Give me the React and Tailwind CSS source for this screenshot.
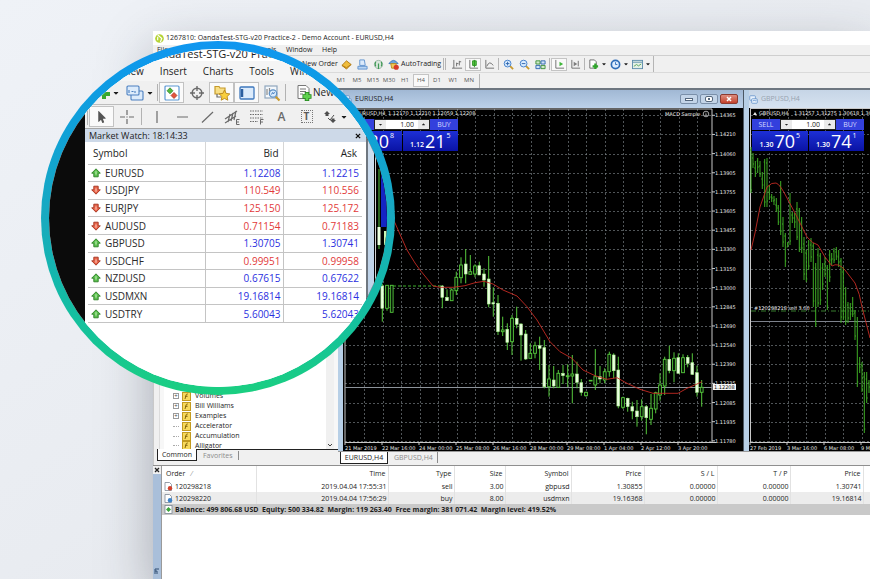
import React from "react";
import { FaCaretDown, FaMousePointer } from "react-icons/fa";

const quotes = [
  { symbol: "EURUSD", bid: "1.12208", ask: "1.12215", up: true },
  { symbol: "USDJPY", bid: "110.549", ask: "110.556", up: false },
  { symbol: "EURJPY", bid: "125.150", ask: "125.172", up: false },
  { symbol: "AUDUSD", bid: "0.71154", ask: "0.71183", up: false },
  { symbol: "GBPUSD", bid: "1.30705", ask: "1.30741", up: true },
  { symbol: "USDCHF", bid: "0.99951", ask: "0.99958", up: false },
  { symbol: "NZDUSD", bid: "0.67615", ask: "0.67622", up: true },
  { symbol: "USDMXN", bid: "19.16814", ask: "19.16814", up: true },
  { symbol: "USDTRY", bid: "5.60043", ask: "5.62043", up: true },
];

const orders = [
  ["120298218", "2019.04.04 17:55:31", "sell", "3.00", "gbpusd", "1.30855", "0.00000", "0.00000", "1.30741"],
  ["120298220", "2019.04.04 17:56:29", "buy", "8.00", "usdmxn", "19.16368", "0.00000", "0.00000", "19.16814"],
];

const orderHeads = ["Time", "Type", "Size", "Symbol", "Price", "S / L", "T / P", "Price"];

const timeframes = ["M1", "M5", "M15", "M30", "H1", "H4", "D1", "W1", "MN"];

const priceLabels = [
  "1.14365", "1.14210", "1.14060", "1.13905", "1.13755", "1.13605", "1.13455", "1.13300", "1.13150",
  "1.13000", "1.12845", "1.12690", "1.12540", "1.12390", "1.12235", "1.12085", "1.11935", "1.11780",
];

const eurDates = [
  "21 Mar 2019", "22 Mar 16:00", "24 Mar 00:00", "25 Mar 08:00", "26 Mar 16:00",
  "28 Mar 00:00", "29 Mar 08:00", "1 Apr 04:00", "2 Apr 12:00", "3 Apr 20:00",
];

// x, high, body top, body bottom, low, filled
const eurCandles = [
  [382.3, 284, 286, 308.3, 321.7, 1],
  [387, 285, 285.3, 308.3, 310.7, 0],
  [391.7, 285, 285.3, 312.3, 312.3, 0],
  [442.3, 285, 286, 297.3, 308.3, 1],
  [447, 289.3, 297.3, 300.7, 300.7, 1],
  [451.7, 288.3, 290, 300.7, 300.7, 0],
  [456.3, 271.7, 277.3, 290.7, 295, 0],
  [461, 257.3, 265, 277.7, 283.3, 0],
  [465.7, 249, 264, 274, 283.3, 1],
  [470.3, 255, 271.7, 274.3, 274.3, 0],
  [475, 264.3, 266, 274, 277.3, 0],
  [479.3, 261.7, 265.7, 275, 275, 1],
  [484, 268.3, 274, 280, 286.7, 1],
  [488.7, 256, 279, 304, 307.3, 1],
  [493.3, 287.3, 302.7, 304, 316.7, 1],
  [498, 295, 303.3, 331.7, 335, 1],
  [502.7, 316.7, 330, 331.7, 336, 0],
  [507.3, 323.3, 329.3, 342.3, 350, 1],
  [512, 315, 318.3, 341.7, 355, 0],
  [516.7, 306.7, 318.3, 324.3, 328.3, 1],
  [521, 323.3, 324, 335, 360.7, 1],
  [525.7, 330, 334, 359, 360, 1],
  [530.3, 343.3, 353.3, 358.3, 358.3, 0],
  [535, 341.7, 345.7, 353.3, 358.3, 0],
  [539.7, 336.7, 345.7, 348.3, 370, 1],
  [544.3, 340, 347.7, 386.7, 388.3, 1],
  [549, 365, 379, 386.7, 396.7, 0],
  [553.7, 366, 380, 386, 388.3, 1],
  [558.3, 370, 373.3, 387.3, 387.3, 0],
  [563, 365, 373.3, 375.7, 384, 1],
  [567.7, 364.3, 375.7, 376.7, 387, 0],
  [572.3, 355, 374, 376, 403.3, 0],
  [577, 361.7, 374, 382.3, 388.3, 1],
  [581.3, 379, 382.7, 392.3, 395.7, 1],
  [586, 391.7, 392.3, 395.7, 396.7, 0],
  [590.7, 380.3, 380.3, 381, 381, 0],
  [595.3, 349, 376.7, 385, 390, 0],
  [600, 366, 376.7, 379, 383.3, 1],
  [604.7, 368.3, 371.7, 380, 383.3, 0],
  [609.3, 351.7, 354.3, 371.7, 376.7, 0],
  [613.7, 353.3, 355, 370.7, 378.3, 1],
  [618.3, 356.7, 370, 406, 408.3, 1],
  [623, 396.7, 397.7, 407.3, 409, 0],
  [627.7, 397.7, 398.3, 406.7, 411.7, 1],
  [632.3, 401.7, 406.7, 411, 419.3, 1],
  [637, 400, 411, 416.7, 426.7, 1],
  [641.7, 399.3, 406.7, 416.7, 420.7, 0],
  [646.3, 405, 406.7, 417.7, 434.3, 1],
  [651, 394, 408.3, 419.3, 425, 0],
  [655.7, 391.7, 392.7, 409, 413.3, 0],
  [660, 373.3, 385, 395, 400.7, 0],
  [664.7, 356.7, 359.3, 386, 395, 0],
  [669.3, 345.7, 359.3, 370.7, 373.3, 1],
  [674, 352.3, 358.3, 370.7, 382.3, 0],
  [678.3, 353.3, 357.7, 373.3, 373.3, 1],
  [683, 354.3, 357.7, 372.7, 372.7, 0],
  [687.7, 355, 357.3, 363.3, 367.3, 1],
  [692.3, 353.3, 362.7, 374.3, 375, 1],
  [697, 365.7, 372.7, 392.3, 396.7, 1],
  [701.7, 380, 387.3, 392.3, 406.7, 0],
];

// x, high, low
const gbpBars = [
  [751, 147, 193], [753, 153, 168], [755.3, 161, 177], [757.7, 158, 173], [760, 161, 177],
  [762.3, 172, 189], [764.7, 159, 207], [767, 158, 207], [769.3, 185, 200], [771.7, 194, 202],
  [774, 196, 205], [776.3, 198, 212], [778.3, 205, 225], [780.7, 181, 235], [783, 217, 247],
  [785.3, 233, 267], [787.7, 242, 247], [790, 193, 245], [792.3, 212, 223], [794.7, 213, 228],
  [797, 202, 240], [799.3, 208, 252], [801.7, 217, 253], [804, 237, 280], [806.3, 250, 282],
  [808.7, 240, 270], [811, 238, 262], [813.3, 243, 307], [815.7, 263, 327], [818, 248, 307],
  [820.3, 253, 305], [822.7, 263, 290], [825, 257, 277], [827.3, 265, 310], [829.7, 250, 282],
  [831.7, 253, 265], [834, 248, 263], [836.3, 247, 260], [838.7, 250, 267], [841, 258, 323],
  [843.3, 267, 320], [845.7, 287, 325], [848, 302, 323], [850.3, 303, 320], [852.7, 297, 317],
  [855, 310, 340], [857.3, 317, 387], [859.7, 357, 373], [862, 362, 392], [864.3, 372, 433],
  [866.7, 372, 403], [869, 380, 393],
];

const range = (n) => Array.from({ length: n }, (_, i) => i);

const Grid = ({ x, cols, right, left }) => (
  <g stroke="#7c8388" strokeWidth="1" strokeDasharray="2 2" shapeRendering="crispEdges">
    {range(cols).map((i) => (
      <line key={i} x1={Math.round(x + i * 18.5)} x2={Math.round(x + i * 18.5)} y1="109" y2="442" opacity="0.65" />
    ))}
    {range(18).map((i) => (
      <line key={i} x1={left} x2={right} y1={Math.round(115.3 + i * 19.15)} y2={Math.round(115.3 + i * 19.15)} opacity="0.65" />
    ))}
  </g>
);

const EurChart = () => (
  <svg viewBox="343 108 396 343" width="396" height="343" className="block" fontFamily="DejaVu Sans" fontSize="5" fill="#e6e6e6">
    <rect x="343" y="108" width="396" height="343" fill="#000" />
    <Grid x={364} cols={19} left={345} right={712} />
    <path d="M345 442V109H712V442M345 442.5H716" fill="none" stroke="#c8c8c8" />
    <line x1="345" x2="712" y1="387.5" y2="387.5" stroke="#8d949b" />
    {priceLabels.map((p, i) => (
      <g key={p}>
        <line x1="712" x2="715" y1={115.3 + i * 19.15} y2={115.3 + i * 19.15} stroke="#c8c8c8" />
        <text x="715" y={Math.round(117.3 + i * 19.15)}>{p}</text>
      </g>
    ))}
    {eurDates.map((d, i) => (
      <g key={d}>
        <line x1={345 + i * 37} x2={345 + i * 37} y1="442" y2="445" stroke="#c8c8c8" />
        <text x={345 + i * 37} y="450">{d}</text>
      </g>
    ))}
    <line x1="393" x2="442" y1="286" y2="286" stroke="#3faf2c" strokeDasharray="3 2" />
    {eurCandles.map(([x, hi, top, bottom, lo, filled], i) => (
      <g key={i} stroke="#55c83c">
        <line x1={x} x2={x} y1={hi} y2={lo} />
        <rect x={x - 1.4} y={top} width="2.8" height={Math.max(bottom - top, 0.5)} fill={filled ? "#eaffe0" : "#061606"} strokeWidth={filled ? 0.6 : 0.9} stroke={filled ? "#a9ec8e" : "#55c83c"} />
      </g>
    ))}
    <path
      d="M380 196L395 223L407 250L415 263L420 270L433 286L440 287.3L453 287.3L465 285.7L475 282.7L484 281.3L493 284L503 290L517 296L527 306.7L537 320L550 341.7L560 351.7L572 358.3L583 370L595 375.7L607 379.3L617 377.7L627 383.3L640 389.3L653 393.3L678 393.3L687 388.3L697 384L702 381.7"
      fill="none"
      stroke="#c42a22"
      strokeWidth="0.9"
    />
    <text x="388" y="115">1.12170 1.12210 1.12059 1.12208</text>
    <text x="356" y="115">EURUSD,H4</text>
    <text x="665" y="116">MACD Sample</text>
    <circle cx="706" cy="114" r="2.8" fill="none" stroke="#e6e6e6" strokeWidth="0.7" />
    <path d="M704.5 115.5q1.5 -1.6 3 0M705 113.2h.6M706.6 113.2h.6" fill="none" stroke="#e6e6e6" strokeWidth="0.7" />
    <rect x="713" y="384" width="23" height="6" fill="#f4f4f4" />
    <text x="714" y="389" fill="#111">1.12208</text>
  </svg>
);

const GbpChart = () => (
  <svg viewBox="749 108 121 343" width="121" height="343" className="block shrink-0" fontFamily="DejaVu Sans" fontSize="5" fill="#e6e6e6">
    <rect x="749" y="108" width="121" height="343" fill="#000" />
    <Grid x={769} cols={6} left={751} right={870} />
    <path d="M750.5 442V109M750 108.5H870M750 442.5H870" fill="none" stroke="#c8c8c8" />
    <line x1="751" x2="870" y1="321.5" y2="321.5" stroke="#7d828c" />
    <line x1="751" x2="870" y1="311" y2="311" stroke="#46a03a" strokeDasharray="5 2 1 2" strokeWidth="0.8" />
    {gbpBars.map(([x, hi, lo], i) => (
      <path key={x} d={`M${x} ${hi}V${lo}M${x - 1} ${hi + 3 + (i % 3) * 2}h1M${x} ${lo - 3 - (i % 4)}h1`} stroke="#3fae25" strokeWidth="1" fill="none" />
    ))}
    <path
      d="M751 250L755 233L760 207L767 187Q772 182 776 183T787 198L795 213L807 237Q813 244 818 245L825 257L832 266Q838 262 845 270L855 283Q860 294 862 307L870 338"
      fill="none"
      stroke="#c42a22"
      strokeWidth="0.9"
    />
    <text x="759" y="115">GBPUSD,H4</text>
    <text x="794" y="115">1.31257 1.31275 1.30618 1.307</text>
    <path d="M753 115h4l-2 -3z" />
    <text x="754" y="310">#120298218 sell 3.00</text>
    {["27 Feb 2019", "3 Mar 16:00", "6 Mar 08:00", "9 M"].map((d, i) => (
      <g key={d}>
        <line x1={750 + i * 37} x2={750 + i * 37} y1="442" y2="445" stroke="#c8c8c8" />
        <text x={750 + i * 37} y="450">{d}</text>
      </g>
    ))}
  </svg>
);

const Price = ({ base, big, sup }) => (
  <button className="flex flex-1 items-end justify-center gap-px bg-linear-to-b from-[#1d2fd6] to-[#0a12a4] text-white">
    <span className="pb-px text-[7px] leading-[10px] font-semibold">{base}</span>
    <span className="text-[18px] leading-[20px]">{big}</span>
    <span className="self-start text-[7px] leading-[10px]">{sup}</span>
  </button>
);

const TradePanel = ({ label, sell, buy }) => (
  <div className="flex w-28 flex-col gap-px">
    <div className="flex h-[11px]">
      <button className="w-7 bg-[#3340dd] text-[7px] leading-[11px] text-[#d5daff]">SELL</button>
      <div className="flex flex-1 items-center border border-[#222] bg-white text-[#222]">
        <button aria-label="Decrease volume" className="h-full w-[11px] bg-[#e9e9e9]">
          <FaCaretDown className="mx-auto size-[5px]" />
        </button>
        <input aria-label={label} defaultValue="1.00" className="w-0 flex-1 pr-1 text-right text-[7px] leading-[9px]" />
        <button aria-label="Increase volume" className="h-full w-[11px] bg-[#e9e9e9]">
          <FaCaretDown className="mx-auto size-[5px] rotate-180" />
        </button>
      </div>
      <button className="w-7 bg-[#3340dd] text-[7px] leading-[11px] text-[#d5daff]">BUY</button>
    </div>
    <div className="flex h-5 gap-px">
      <Price {...sell} />
      <Price {...buy} />
    </div>
  </div>
);

const WindowIcon = ({ className }) => (
  <svg viewBox="0 0 12 12" className={className} fill="#e8f2fd" stroke="#5b8cc7">
    <rect x="1" y="1" width="7.5" height="6" rx="1" />
    <rect x="3.5" y="5" width="7.5" height="6" rx="1" />
    <path d="M5 8l2 -1l1 1l2 -1" fill="none" />
  </svg>
);

const Sep = () => <span className="mx-px h-3 w-px bg-[#b5b5b5]" />;

const Tool = ({ label, active, caret, children }) => (
  <button
    aria-label={label}
    className={`flex h-[13px] items-center justify-center ${caret ? "w-[22px] gap-[2px]" : "w-4"} ${active ? "border border-[#c4c4c4] bg-[#f9f9f9]" : ""}`}
  >
    {children}
    {caret && <FaCaretDown className="size-[6px]" />}
  </button>
);

const Ico = ({ children }) => (
  <svg viewBox="0 0 12 12" className="size-[11px] shrink-0" fill="none" stroke="#6b6b6b" strokeWidth="1">
    {children}
  </svg>
);

const MainToolbar = () => (
  <div className="flex h-4 items-center pl-[149px]">
    <span className="w-9 text-[7px]">New Order</span>
    <Tool label="MetaEditor">
      <Ico>
        <path d="M1 7l5 -5l5 4l-5 5z" fill="#f0bd3c" stroke="#b27a12" />
        <path d="M1 7l5 2.5l5 -3.5" stroke="#b27a12" />
      </Ico>
    </Tool>
    <Tool label="Terminal">
      <Ico>
        <path d="M3 1h5l1 6H3z" fill="#dbeafb" stroke="#5f93cf" />
        <path d="M1 8h10v3H1z" fill="#b8d4f2" stroke="#5f93cf" />
      </Ico>
    </Tool>
    <Tool label="Signals">
      <Ico>
        <circle cx="6" cy="6" r="4.5" fill="#d9e6dc" stroke="#9bb5a4" />
        <path d="M6 5v6M3 3q-1.5 3 0 5M9 3q1.5 3 0 5" stroke="#3f9a55" strokeWidth="1.3" />
      </Ico>
    </Tool>
    <button className="flex items-center gap-[2px] pl-[2px] text-[7px]">
      <Ico>
        <path d="M1 5q5 -7 10 0z" fill="#6ea5de" stroke="#3d77b8" />
        <path d="M3 5h6l-1 5H4z" fill="#f3c95a" stroke="#b88a22" />
        <circle cx="9" cy="9" r="2.8" fill="#d63a2a" stroke="none" />
      </Ico>
      AutoTrading
    </button>
    <span className="mr-[3px] ml-[2px] h-3 w-[3px] border-x border-[#b5b5b5]" />
    <Tool label="Bar chart">
      <Ico>
        <path d="M2 1v9H11M2 10H0M5 4v4M5 5h2M8 2v5M8 3h2" />
      </Ico>
    </Tool>
    <Tool label="Candlesticks" active>
      <Ico>
        <path d="M2 1v9H11" />
        <path d="M5 2h4v5H5z" fill="#5ccb48" stroke="#2a9320" />
        <path d="M7 1v8" stroke="#2a9320" />
      </Ico>
    </Tool>
    <Tool label="Line chart">
      <Ico>
        <path d="M2 1v9H11M3 8q3 -7 7 -1" />
      </Ico>
    </Tool>
    <Sep />
    <Tool label="Zoom in">
      <Ico>
        <path d="M7.5 7.5l3.5 3.5" stroke="#c99a2e" strokeWidth="2" />
        <circle cx="5" cy="5" r="3.7" fill="#d8ebff" stroke="#3d7cc9" />
        <path d="M3 5h4M5 3v4" stroke="#2b62ab" />
      </Ico>
    </Tool>
    <Tool label="Zoom out">
      <Ico>
        <path d="M7.5 7.5l3.5 3.5" stroke="#c99a2e" strokeWidth="2" />
        <circle cx="5" cy="5" r="3.7" fill="#d8ebff" stroke="#3d7cc9" />
        <path d="M3 5h4" stroke="#2b62ab" />
      </Ico>
    </Tool>
    <Tool label="Tile windows">
      <Ico>
        <path d="M1 2h4.5v3.5H1zM6.5 7h4.5v3.5H6.5z" fill="#cfe9c8" stroke="#3d8f3a" />
        <path d="M6.5 2h4.5v3.5H6.5zM1 7h4.5v3.5H1z" fill="#cfe2f8" stroke="#2e66ad" />
      </Ico>
    </Tool>
    <Sep />
    <Tool label="Auto scroll" active>
      <Ico>
        <path d="M2 1v9H11" />
        <path d="M6 3v5l4 -2.5z" fill="#3fb63a" stroke="none" />
      </Ico>
    </Tool>
    <Tool label="Chart shift">
      <Ico>
        <path d="M2 1v9H11M9 2v6" />
        <path d="M4 3v5l4 -2.5z" fill="#7b7b7b" stroke="none" />
      </Ico>
    </Tool>
    <Sep />
    <Tool label="Indicators" caret>
      <Ico>
        <path d="M2 1h5l2 2v7H2z" fill="#fff" />
        <path d="M8 5v6M5 8h6" stroke="#2fa52a" strokeWidth="2.4" />
      </Ico>
    </Tool>
    <Tool label="Periods" caret>
      <Ico>
        <circle cx="6" cy="6" r="4.5" fill="#dcecff" stroke="#2f6db8" strokeWidth="1.8" />
        <path d="M6 3.5V6h2" stroke="#2f6db8" />
      </Ico>
    </Tool>
    <Tool label="Templates" caret>
      <Ico>
        <rect x="0.5" y="1.5" width="11" height="9" fill="#e4f0e6" stroke="#5c8cab" />
        <path d="M1 3.5h10" stroke="#5c8cab" />
        <path d="M2 8l3 -2l2 1.5l3 -2" stroke="#55a358" />
      </Ico>
    </Tool>
    <span className="ml-px h-4 w-px bg-[#b5b5b5]" />
  </div>
);

const FunctionIcon = () => (
  <svg viewBox="0 0 9 9" className="size-[9px]">
    <rect x="0.5" y="0.5" width="8" height="8" fill="#f7d95c" stroke="#c29a1f" />
    <path d="M3 7l1.2 -4.2q.3 -1 1.6 -.8M3.2 4.3h2.4" fill="none" stroke="#7a5a05" strokeWidth="0.9" />
  </svg>
);

const Navigator = () => (
  <aside className="flex w-[185px] flex-col justify-end border-l border-[#c9c9c9] bg-[#f0f0f0] pb-1 pl-px">
    <div className="ml-1 flex flex-1 border-l border-[#dcdcdc] bg-[#f7f7f7] pr-1">
      <ul className="ml-1 flex flex-1 flex-col justify-end bg-white pl-[9px] text-[7px]">
        {["Volumes", "Bill Williams", "Examples", "Accelerator", "Accumulation", "Alligator"].map((name, i) => (
          <li key={name} className={`flex gap-[3px] overflow-hidden ${i === 5 ? "h-2 items-start" : "h-[10px] items-center"}`}>
            {i < 3 ? (
              <span className="flex size-[6px] items-center justify-center border border-[#9a9a9a] text-[6px] leading-none text-[#444]">+</span>
            ) : (
              <span className="w-[6px] self-center border-t border-dotted border-[#aaa]" />
            )}
            <FunctionIcon />
            <span className="pl-px leading-[10px]">{name}</span>
          </li>
        ))}
      </ul>
      <span className="flex w-2 items-end justify-center bg-[#f0f0f0] pb-[2px]">
        <svg viewBox="0 0 6 4" className="w-[6px]" fill="none" stroke="#444">
          <path d="M1 1l2 2l2 -2" />
        </svg>
      </span>
    </div>
    <div className="ml-[2px] flex h-3 items-stretch text-[7px]">
      <button className="w-10 border border-t-0 border-[#222] bg-white leading-[10px]">Common</button>
      <button className="flex-1 border-t border-[#222] pl-[6px] text-left leading-[10px] text-[#8b8b8b]">
        <span className="border-r border-[#8b8b8b] pr-[5px]">Favorites</span>
      </button>
    </div>
  </aside>
);

const CaptionButtons = () => (
  <div className="flex gap-[2px]">
    <button aria-label="Minimize" className="flex h-[10px] w-[18px] items-center justify-center rounded-xs border border-[#7a8fa9] bg-[#c3d4e8]">
      <span className="h-[3px] w-2 border border-[#55677d] bg-white" />
    </button>
    <button aria-label="Maximize" className="flex h-[10px] w-[18px] items-center justify-center rounded-xs border border-[#7a8fa9] bg-[#c3d4e8]">
      <span className="flex h-[6px] w-2 items-center justify-center rounded-xs border border-[#55677d] bg-white">
        <span className="size-[2px] bg-[#55677d]" />
      </span>
    </button>
    <button aria-label="Close" className="flex h-[10px] w-[18px] items-center justify-center rounded-xs border border-[#8c3b31] bg-linear-to-b from-[#dd8d7f] to-[#c23f2b]">
      <svg viewBox="0 0 6 6" className="size-[6px]" stroke="#fff" strokeWidth="1.5">
        <path d="M1 1l4 4M5 1l-4 4" />
      </svg>
    </button>
  </div>
);

const Workspace = () => (
  <div className="flex border-t-2 border-[#6d7680]">
    <Navigator />
    <main className="flex min-w-0 flex-1 flex-col">
      <div className="flex bg-[#b7cfe6]">
        <section className="w-[406px] border-r border-[#4b5763] pl-[5px]">
          <header className="flex h-[18px] items-center gap-[3px] bg-linear-to-b from-[#a1b8d4] to-[#bcd1e9] pr-[5px] text-[7px]">
            <WindowIcon className="size-[9px]" />
            <span className="flex-1">EURUSD,H4</span>
            <CaptionButtons />
          </header>
          <div className="relative bg-black">
            <EurChart />
            <div className="absolute top-[11px] left-[3px]">
              <TradePanel
                label="EURUSD volume"
                sell={{ base: "1.12", big: "20", sup: "8" }}
                buy={{ base: "1.12", big: "21", sup: "5" }}
              />
            </div>
          </div>
        </section>
        <section className="min-w-0 flex-1 overflow-hidden pl-[5px]">
          <header className="flex h-[18px] items-center gap-[3px] bg-linear-to-b from-[#c6d5e6] to-[#d6e2f0] text-[7px] text-[#98a3af]">
            <WindowIcon className="size-[9px]" />
            <span>GBPUSD,H4</span>
          </header>
          <div className="relative bg-black">
            <GbpChart />
            <div className="absolute top-[11px] left-[3px]">
              <TradePanel
                label="GBPUSD volume"
                sell={{ base: "1.30", big: "70", sup: "5" }}
                buy={{ base: "1.30", big: "74", sup: "1" }}
              />
            </div>
          </div>
        </section>
      </div>
      <nav className="flex h-[14px] items-start gap-[6px] border-t border-[#9a9a9a] pl-[2px] text-[7px]">
        <button className="h-3 w-12 border border-t-0 border-[#222] bg-white leading-[11px]">EURUSD,H4</button>
        <button className="border-r border-[#8b8b8b] pr-1 leading-[11px] text-[#8b8b8b]">GBPUSD,H4</button>
      </nav>
    </main>
  </div>
);

const OrderIcon = ({ color }) => (
  <svg viewBox="0 0 9 9" className="size-[9px]">
    <path d="M1 .5h4.5l2 2v6H1z" fill="#fff" stroke="#7c8794" strokeWidth="0.8" />
    <circle cx="6" cy="6.3" r="2.2" fill={color} />
  </svg>
);

const Terminal = () => (
  <div className="flex flex-1 border-t border-[#8f8f8f]">
    <div className="flex w-2 flex-col items-center bg-[#f0f0f0]">
      <button aria-label="Close terminal" className="py-px">
        <svg viewBox="0 0 6 6" className="size-[6px]" stroke="#222" strokeWidth="1.3">
          <path d="M1 1l4 4M5 1l-4 4" />
        </svg>
      </button>
      <div className="flex w-full flex-1 items-end justify-center bg-[#a9bfda] pb-1">
        <svg viewBox="0 0 6 7" className="w-[6px]" fill="none" stroke="#2f4c73">
          <path d="M1 1h4M1 3h2v3M1 1v5" />
        </svg>
      </div>
    </div>
    <div className="min-w-0 flex-1 border-l border-[#9a9a9a] bg-white">
      <table className="w-full table-fixed text-right text-[7px] leading-[11px]">
        <colgroup>
          <col className="w-[94px]" />
          <col className="w-[132px]" />
          <col className="w-[66px]" />
          <col className="w-[51px]" />
          <col className="w-[66px]" />
          <col className="w-[73px]" />
          <col className="w-[73px]" />
          <col className="w-[73px]" />
          <col className="w-[73px]" />
          <col />
        </colgroup>
        <thead>
          <tr className="h-[14px]">
            <th className="border-r border-[#e2e2e2] pl-1 text-left font-normal">
              Order <span className="pl-1 text-[#888]">⁄</span>
            </th>
            {orderHeads.map((h, i) => (
              <th key={i} className="border-r border-[#e2e2e2] pr-[2px] font-normal">{h}</th>
            ))}
            <th />
          </tr>
        </thead>
        <tbody>
          {orders.map((row, r) => (
            <tr key={row[0]} className={`h-3 ${r === 1 ? "bg-[#ececec]" : ""}`}>
              {row.map((cell, i) => (
                <td key={i} className="border-r border-[#e2e2e2] pr-px">
                  {i === 0 ? (
                    <span className="flex items-center gap-[2px] pl-[2px]">
                      <OrderIcon color={r === 0 ? "#d2402c" : "#3b82c9"} />
                      {cell}
                    </span>
                  ) : (
                    cell
                  )}
                </td>
              ))}
              <td />
            </tr>
          ))}
          <tr className="h-[11px] bg-[#c9c9c9] text-left font-bold">
            <td colSpan={10}>
              <span className="flex items-center gap-[2px] pl-[2px] whitespace-pre">
                <svg viewBox="0 0 9 9" className="size-[9px]">
                  <rect x="1" y="0.5" width="7" height="8" fill="#fff" stroke="#7c8794" strokeWidth="0.8" />
                  <path d="M4.5 2l2.5 2.5l-2.5 2.5l-2.5 -2.5z" fill="#3aa63a" />
                </svg>
                {"Balance: 499 806.68 USD  Equity: 500 334.82  Margin: 119 263.40  Free margin: 381 071.42  Margin level: 419.52%"}
              </span>
            </td>
          </tr>
        </tbody>
      </table>
    </div>
  </div>
);

const Arrow = ({ up }) => (
  <svg viewBox="0 0 10 10" className={`size-[10px] ${up ? "" : "rotate-180"}`}>
    <path
      d="M5 .8L9.3 5.2H7.2V8.8H2.8V5.2H.7z"
      fill={up ? "#5cc04e" : "#e8654a"}
      stroke={up ? "#2b7f25" : "#a3301c"}
      strokeWidth="0.9"
      strokeLinejoin="round"
    />
    <path d="M5 3.2v3.4" stroke={up ? "#c9f2c0" : "#ffd2c6"} strokeWidth="1" />
  </svg>
);

const LensTool = ({ label, active, children }) => (
  <button
    aria-label={label}
    className={`flex h-[21px] w-[25px] shrink-0 items-center justify-center ${active ? "border border-[#c2c2c2] bg-[#fafafa]" : ""}`}
  >
    <svg viewBox="0 0 18 18" className="size-[18px]" fill="none" stroke="#6a6a6a" strokeWidth="1.2">
      {children}
    </svg>
  </button>
);

const LensSep = () => <span className="mx-px h-[17px] w-px shrink-0 bg-[#b2b2b2]" />;

const LensToolbars = () => (
  <>
    <div className="flex h-6 items-center border-b border-[#bdbdbd] bg-[#f0f0f0] pl-[7px]">
      <button aria-label="New chart" className="flex w-8 items-center justify-center gap-[2px]">
        <svg viewBox="0 0 14 14" className="size-[14px]" stroke="#38a82f" strokeWidth="4">
          <path d="M8 2v11M2 8h12" />
        </svg>
        <FaCaretDown className="size-2" />
      </button>
      <button aria-label="Profiles" className="flex w-8 items-center justify-center gap-[2px]">
        <svg viewBox="0 0 18 16" className="size-[18px]" fill="#dcebfb" stroke="#4a7fc0" strokeWidth="1.1">
          <rect x="5" y="6" width="12" height="9" rx="1" />
          <rect x="1" y="1" width="12" height="9" rx="1" />
          <path d="M3 5v3M5.5 6.5h2M9 6v2" fill="none" />
        </svg>
        <FaCaretDown className="size-2" />
      </button>
      <LensSep />
      <LensTool label="Market watch" active>
        <rect x="2" y="2" width="14" height="14" rx="1" fill="#fff" stroke="#5a97d3" />
        <path d="M7 3.8l3 3l-3 3l-3 -3z" fill="#52b83e" stroke="#2b7f25" strokeWidth="0.7" />
        <path d="M11 8.5l3 3l-3 3l-3 -3z" fill="#e3543b" stroke="#a3301c" strokeWidth="0.7" />
      </LensTool>
      <LensTool label="Data window">
        <circle cx="9" cy="9" r="4.8" strokeWidth="1.5" />
        <path d="M9 2v5M9 11v5M2 9h5M11 9h5" strokeWidth="1.4" />
      </LensTool>
      <LensTool label="Navigator" active>
        <path d="M2 4V2.5h4L7 4h5v6H2z" fill="#f8df86" stroke="#c59a2a" />
        <path d="M4 10v3h4" />
        <path d="M11.5 6l1.6 3.4l3.7 .5l-2.7 2.6l.7 3.7l-3.3 -1.8l-3.3 1.8l.7 -3.7l-2.7 -2.6l3.7 -.5z" fill="#f9cf3e" stroke="#b8861a" strokeWidth="0.9" />
      </LensTool>
      <LensTool label="Terminal" active>
        <rect x="2" y="3" width="14" height="12" rx="1" fill="#dcebfb" stroke="#3e78bd" strokeWidth="1.3" />
        <path d="M4 5v8" stroke="#2c5f9f" strokeWidth="2.5" />
      </LensTool>
      <LensTool label="Strategy tester">
        <rect x="2" y="2" width="12" height="12" fill="#f3f7fb" stroke="#8fa6bd" />
        <path d="M4 5v6M6.5 4v6" stroke="#8a8a8a" />
        <path d="M12.5 12.5l4 4" stroke="#c99a2e" strokeWidth="2.2" />
        <circle cx="10" cy="9.5" r="3.7" fill="#d7eafc" stroke="#5c8fc4" />
        <path d="M8.5 10.5l1 -2l1 1.5l1 -2" stroke="#3e78bd" strokeWidth="0.9" />
      </LensTool>
      <LensSep />
      <button className="flex shrink-0 items-center pl-2 text-[10px]">
        <svg viewBox="0 0 18 18" className="size-[18px]" fill="none" stroke="#777">
          <path d="M3 1.5h8l3 3v10H3z" fill="#fdfdfd" />
          <path d="M5 5h6M5 7.5h6M5 10h3" />
          <path d="M12 8v9M7.5 12.5h9" stroke="#23851d" strokeWidth="4.5" />
          <path d="M12 8.8v7.4M8.3 12.500h7.4" stroke="#5fd04f" strokeWidth="2.8" />
        </svg>
        New
      </button>
    </div>
    <div className="flex h-6 items-center border-b border-[#a6a6a6] bg-[#f0f0f0] pl-px">
      <LensSep />
      <button aria-label="Cursor" className="flex h-[21px] w-[25px] shrink-0 items-center justify-center border border-[#c2c2c2] bg-[#fafafa]">
        <FaMousePointer className="size-3 text-[#555]" />
      </button>
      <LensTool label="Crosshair">
        <path d="M9 2v5M9 11v5M2 9h5M11 9h5M9 8.5v1" />
      </LensTool>
      <span className="mx-[2px] h-[17px] w-px shrink-0 bg-[#b2b2b2]" />
      <LensTool label="Vertical line">
        <path d="M9 3v12" />
      </LensTool>
      <LensTool label="Horizontal line">
        <path d="M4 9h11" />
      </LensTool>
      <LensTool label="Trend line">
        <path d="M4 14.5L15 4" />
      </LensTool>
      <LensTool label="Equidistant channel">
        <path d="M2 11L14 3M2 15L13 8M5 14l2 -8M8 13l2 -8M11 12l2 -9" />
        <path d="M16.5 11.5h-3v5h3M13.5 14h2.5" strokeWidth="1" />
      </LensTool>
      <LensTool label="Fibonacci">
        <path d="M2 3h13M2 6.5h13M2 10h13M2 13.5h8" strokeDasharray="1.5 1" />
        <path d="M15.5 11.5h-3v5M12.5 14h2.5" strokeWidth="1" />
      </LensTool>
      <button className="w-[25px] shrink-0 text-[12px] font-semibold text-[#6a6a6a]">A</button>
      <button className="flex w-[25px] shrink-0 justify-center text-[10px] leading-[11px] font-bold text-[#5a5a5a]">
        <span className="w-3 border border-dotted border-[#777]">T</span>
      </button>
      <button aria-label="Arrows" className="flex shrink-0 items-center gap-[3px] pl-1">
        <svg viewBox="0 0 14 14" className="size-[14px]" fill="#4e4e4e">
          <path d="M4 1l3 3H5.500v2h-3V4H1zM10 13l-3 -3h1.500V8.500h3V10H13z" />
          <path d="M5 8l2 2l4 -5" fill="none" stroke="#4e4e4e" />
        </svg>
        <FaCaretDown className="size-2" />
      </button>
    </div>
  </>
);

const MarketWatch = () => (
  <>
    <div className="flex h-[13px] items-center justify-between bg-[#cdd9e8] pr-[5px] pl-1 text-[9px]">
      <span>Market Watch: 18:14:33</span>
      <button aria-label="Close market watch">
        <svg viewBox="0 0 7 7" className="size-[6px]" stroke="#111" strokeWidth="1.5">
          <path d="M1 1l5 5M6 1l-5 5" />
        </svg>
      </button>
    </div>
    <table className="mr-1 ml-[3px] h-[181px] w-[274px] table-fixed text-right text-[10px] leading-[14px]">
      <colgroup>
        <col className="w-[117px]" />
        <col className="w-[78px]" />
        <col />
      </colgroup>
      <thead>
        <tr className="h-[22px] border-b border-[#c4c4c4]">
          <th className="border-r border-[#d6d6d6] pl-[5px] text-left font-normal">Symbol</th>
          <th className="border-r border-[#d6d6d6] pr-1 font-normal">Bid</th>
          <th className="pr-[5px] font-normal">Ask</th>
        </tr>
      </thead>
      <tbody>
        {quotes.map((q) => (
          <tr key={q.symbol} className={`border-b border-[#c4c4c4] ${q.up ? "text-[#2b30e0]" : "text-[#e23a3a]"}`}>
            <td className="border-r border-[#c4c4c4] pl-[3px] text-[#2a2a2a]">
              <span className="flex items-center gap-1">
                <Arrow up={q.up} />
                {q.symbol}
              </span>
            </td>
            <td className="border-r border-[#c4c4c4] pr-[2px]">{q.bid}</td>
            <td className="pr-[3px]">{q.ask}</td>
          </tr>
        ))}
      </tbody>
    </table>
  </>
);

const Lens = () => (
  <div className="absolute top-[41px] left-[41px] size-[354px] rounded-full bg-linear-to-b from-[#1096f0] via-[#19aabf] to-[#1bcf80] p-2">
    <div className="flex size-full overflow-hidden rounded-full bg-white">
      <div className="w-9 shrink-0 bg-[#0b0b0b]" />
      <div className="flex w-[281px] shrink-0 flex-col overflow-hidden bg-white">
        <div className="h-3 pl-[62px] text-[11px] leading-[9px] whitespace-nowrap">OandaTest-STG-v20 Practice-2</div>
        <div className="flex h-5 items-center gap-4 bg-[#f5f5f5] pl-[37px] text-[10px]">
          <span>View</span>
          <span>Insert</span>
          <span>Charts</span>
          <span>Tools</span>
          <span>Window</span>
        </div>
        <LensToolbars />
        <MarketWatch />
      </div>
      <div className="flex flex-1 bg-black">
        <div className="w-[2px] bg-[#6f7780]" />
        <div className="w-[6px] bg-linear-to-b from-[#dfe9f4] via-[#c3d6ea] to-[#b7cde6]" />
        <svg viewBox="0 0 13 338" className="h-full w-[13px]">
          <rect width="13" height="338" fill="#000" />
          <path d="M1.5 0v338" stroke="#d0d0d0" />
          <rect x="7" y="60" width="6" height="118" fill="#1524c4" />
          <path d="M5 120v80" stroke="#55c83c" />
          <rect x="3.5" y="178" width="3" height="18" fill="#eaffe0" />
          <rect x="10" y="182" width="3" height="14" fill="#c9f7b5" />
        </svg>
      </div>
    </div>
  </div>
);

const App = () => {
  return (
    <div className="relative flex min-h-screen overflow-hidden bg-linear-to-br from-[#eff2f7] via-[#e9ecf1] to-[#e2e4e8] pt-[31px] pl-[153px] font-['Open_Sans','Noto_Sans',sans-serif] text-[#1d1d1d]">
      <div className="flex min-w-0 flex-1 flex-col bg-[#f0f0f0] shadow-[0_20px_50px_rgba(40,45,60,0.35)]">
        <header className="flex h-[14px] items-center gap-[2px] bg-white pl-[2px] text-[7px]">
          <svg viewBox="0 0 10 10" className="size-[9px]">
            <circle cx="5" cy="5" r="4.8" fill="#b5d334" />
            <path d="M3 1l4.5 4L6 9M3 3v4" fill="none" stroke="#fff" strokeWidth="1.3" />
          </svg>
          <h1>1267810: OandaTest-STG-v20 Practice-2 - Demo Account - EURUSD,H4</h1>
        </header>
        <nav className="flex h-[11px] items-center border-b border-[#cfcfcf] pl-1 text-[7px]">
          <span className="w-[102px]">File</span>
          <span className="w-[27px]">Tools</span>
          <span className="w-9">Window</span>
          <span>Help</span>
        </nav>
        <MainToolbar />
        <div className="flex h-4 items-center border-t border-[#dadada] pl-[180px] text-[6px] text-[#555]">
          {timeframes.map((t) => (
            <button key={t} className={`h-[13px] w-4 ${t === "H4" ? "border border-[#c4c4c4] bg-[#f9f9f9]" : ""}`}>
              {t}
            </button>
          ))}
          <span className="ml-[2px] h-[14px] w-px bg-[#b5b5b5]" />
        </div>
        <Workspace />
        <Terminal />
      </div>
      <Lens />
    </div>
  );
};

export default App;
